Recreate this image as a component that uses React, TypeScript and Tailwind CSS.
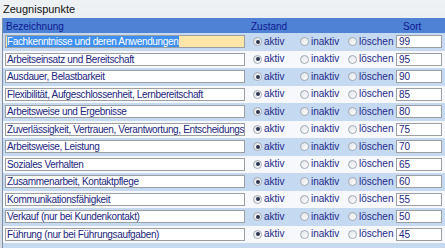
import React from "react";

const rows: { name: string; sort: string }[] = [
  { name: "Fachkenntnisse und deren Anwendungen", sort: "99" },
  { name: "Arbeitseinsatz und Bereitschaft", sort: "95" },
  { name: "Ausdauer, Belastbarkeit", sort: "90" },
  { name: "Flexibilität, Aufgeschlossenheit, Lernbereitschaft", sort: "85" },
  { name: "Arbeitsweise und Ergebnisse", sort: "80" },
  { name: "Zuverlässigkeit, Vertrauen, Verantwortung, Entscheidungsfähigkeit", sort: "75" },
  { name: "Arbeitsweise, Leistung", sort: "70" },
  { name: "Soziales Verhalten", sort: "65" },
  { name: "Zusammenarbeit, Kontaktpflege", sort: "60" },
  { name: "Kommunikationsfähigkeit", sort: "55" },
  { name: "Verkauf (nur bei Kundenkontakt)", sort: "50" },
  { name: "Führung (nur bei Führungsaufgaben)", sort: "45" },
];

function Radio({ checked }: { checked: boolean }) {
  return (
    <div className="w-[9px] h-[9px] rounded-full border border-[#a3a9b2] bg-gradient-to-br from-[#dfe3e8] to-[#ffffff] flex items-center justify-center shrink-0">
      {checked && <div className="w-[4px] h-[4px] rounded-full bg-[#2a3650]" />}
    </div>
  );
}

function Option({ label, checked, w }: { label: string; checked: boolean; w: string }) {
  return (
    <div className={`flex items-center gap-[2px] ${w}`}>
      <Radio checked={checked} />
      <span className="text-[10px] leading-[12px] text-[#1f2a8a]">{label}</span>
    </div>
  );
}

export default function App() {
  return (
    <div className="w-[445px] h-[248px] overflow-hidden bg-gradient-to-b from-[#eef1f4] to-[#d3dce6] font-['Liberation_Sans',Arial,sans-serif]">
      <div className="h-[18px] pl-[3px] pt-[3px] text-[11px] leading-[12px] text-[#111]">Zeugnispunkte</div>
      <div className="ml-[2px] border-l border-[#7d8fa8]">
        <div className="h-[15px] bg-[#4f82d4] flex items-center pt-[2px] text-[10px] text-[#0e1890]">
          <div className="w-[248px] pl-[3px]">Bezeichnung</div>
          <div className="w-[149px]">Zustand</div>
          <div className="pl-[3px]">Sort</div>
        </div>
        {rows.map((r, i) => (
          <div
            key={i}
            className={`h-[17.5px] flex items-center ${i % 2 === 0 ? "bg-[#c5d9f1]" : "bg-[#f6f8fb]"}`}
          >
            <div
              className={`ml-[2px] w-[240px] h-[13px] border border-[#9b9ea3] overflow-hidden whitespace-nowrap text-[10px] leading-[11px] tracking-[-0.35px] pl-[1px] ${
                i === 0 ? "bg-[#fde6a8]" : "bg-white"
              }`}
            >
              {i === 0 ? (
                <span className="bg-[#3d8ff0] text-white pr-[1px]">{r.name}</span>
              ) : (
                <span className="text-[#22267e]">{r.name}</span>
              )}
            </div>
            <div className="ml-[8px] flex items-center">
              <Option label="aktiv" checked w="w-[47px]" />
              <Option label="inaktiv" checked={false} w="w-[48px]" />
              <Option label="löschen" checked={false} w="w-[48px]" />
            </div>
            <div className="w-[46px] h-[13px] border border-[#9b9ea3] bg-white text-[10px] leading-[11px] pl-[2px] text-[#22267e]">
              {r.sort}
            </div>
          </div>
        ))}
        <div className="h-[10px] bg-[#c5d9f1]" />
      </div>
    </div>
  );
}
